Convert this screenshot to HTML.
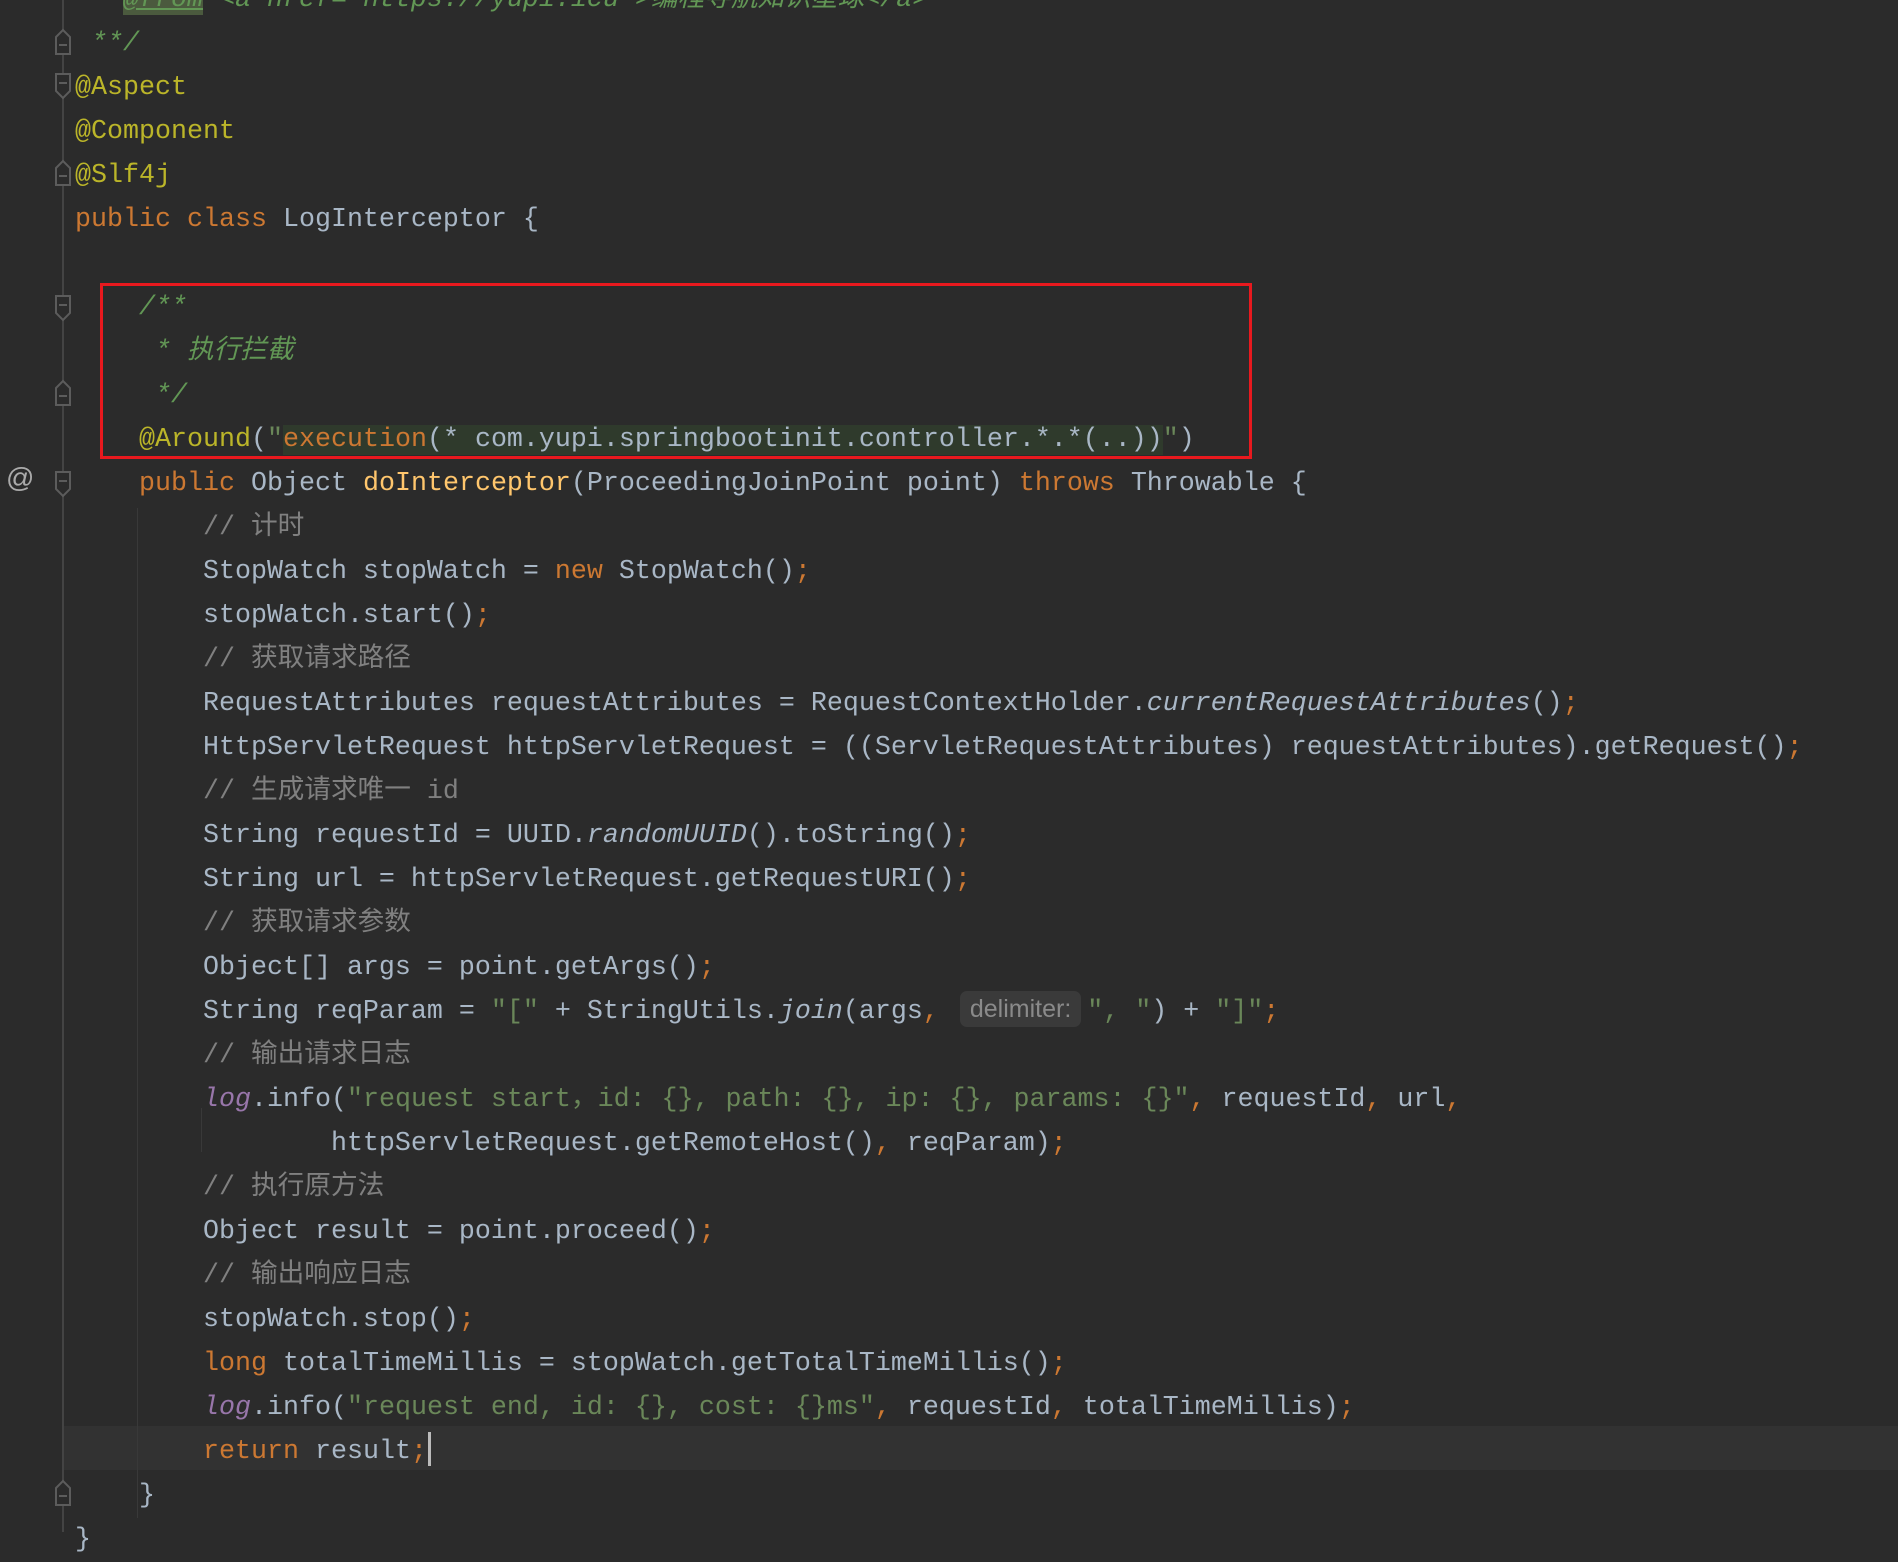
<!DOCTYPE html>
<html><head><meta charset="utf-8"><style>
html,body{margin:0;padding:0;}
body{width:1898px;height:1532px;background:#2b2b2b;position:relative;overflow:hidden;font-family:"Liberation Mono","Noto Sans CJK SC",monospace;font-size:26.67px;color:#a9b7c6;}
.gl{position:absolute;left:62px;top:0;width:2px;height:1532px;background:#444;}
.hl{position:absolute;left:64px;top:1426px;width:1834px;height:44px;background:#323232;}
.ig{position:absolute;width:1px;background:#393939;}
pre{position:absolute;left:75px;top:-22px;margin:0;font:inherit;line-height:44px;white-space:pre;}
.k{color:#cc7832}.a{color:#bbb529}.s{color:#6a8759}.c{color:#808080}.d{color:#629755;font-style:italic}
.m{color:#ffc66d}.i{font-style:italic}.l{color:#9876aa;font-style:italic}
.eb{background:#2f3a2c;color:#a9b7c6}
.tag{background:#4b5a3e;text-decoration:underline}
.hint{display:inline-block;font-family:"Liberation Sans","DejaVu Sans",sans-serif;font-size:25px;color:#8a8a8a;background:#3a3a3a;border-radius:7px;line-height:36px;padding:0 10px;margin:0 6px 0 21px;vertical-align:1px;font-style:normal}
.caret{display:inline-block;width:3px;height:34px;background:#bbb;vertical-align:-8px;margin-left:1px}
.box{position:absolute;left:100px;top:283px;width:1146px;height:170px;border:3px solid #e8191e;}
.f{position:absolute;left:54px;}
.at{position:absolute;left:6px;top:462px;color:#aaa;font-family:"Liberation Sans",sans-serif;font-size:28px;}
</style></head><body>
<div class="hl"></div>
<div class="gl"></div>
<div class="ig" style="left:137px;top:508px;height:1010px"></div>
<div class="ig" style="left:201px;top:1108px;height:44px"></div>
<svg class="f" style="top:28px" width="18" height="28"><path d="M2 9 L9 2 L16 9 L16 26 L2 26 Z" fill="#2b2b2b" stroke="#5c5c5c" stroke-width="2"/><path d="M5 17 H13" stroke="#5c5c5c" stroke-width="2"/></svg>
<svg class="f" style="top:72px" width="18" height="28"><path d="M2 2 L16 2 L16 19 L9 26 L2 19 Z" fill="#2b2b2b" stroke="#5c5c5c" stroke-width="2"/><path d="M5 11 H13" stroke="#5c5c5c" stroke-width="2"/></svg>
<svg class="f" style="top:159px" width="18" height="28"><path d="M2 9 L9 2 L16 9 L16 26 L2 26 Z" fill="#2b2b2b" stroke="#5c5c5c" stroke-width="2"/><path d="M5 17 H13" stroke="#5c5c5c" stroke-width="2"/></svg>
<svg class="f" style="top:294px" width="18" height="28"><path d="M2 2 L16 2 L16 19 L9 26 L2 19 Z" fill="#2b2b2b" stroke="#5c5c5c" stroke-width="2"/><path d="M5 11 H13" stroke="#5c5c5c" stroke-width="2"/></svg>
<svg class="f" style="top:379px" width="18" height="28"><path d="M2 9 L9 2 L16 9 L16 26 L2 26 Z" fill="#2b2b2b" stroke="#5c5c5c" stroke-width="2"/><path d="M5 17 H13" stroke="#5c5c5c" stroke-width="2"/></svg>
<svg class="f" style="top:470px" width="18" height="28"><path d="M2 2 L16 2 L16 19 L9 26 L2 19 Z" fill="#2b2b2b" stroke="#5c5c5c" stroke-width="2"/><path d="M5 11 H13" stroke="#5c5c5c" stroke-width="2"/></svg>
<svg class="f" style="top:1479px" width="18" height="28"><path d="M2 9 L9 2 L16 9 L16 26 L2 26 Z" fill="#2b2b2b" stroke="#5c5c5c" stroke-width="2"/><path d="M5 17 H13" stroke="#5c5c5c" stroke-width="2"/></svg>
<div class="at">@</div>
<pre><span class="d"> * <span class="tag">@from</span> &lt;a href="https://yupi.icu"&gt;编程导航知识星球&lt;/a&gt;</span>
<span class="d"> **/</span>
<span class="a">@Aspect</span>
<span class="a">@Component</span>
<span class="a">@Slf4j</span>
<span class="k">public class </span>LogInterceptor {

    <span class="d">/**</span>
<span class="d">     * 执行拦截</span>
<span class="d">     */</span>
    <span class="a">@Around</span>(<span class="s">"</span><span class="eb"><span class="k">execution</span>(* com.yupi.springbootinit.controller.*.*(..))</span><span class="s">"</span>)
    <span class="k">public </span>Object <span class="m">doInterceptor</span>(ProceedingJoinPoint point) <span class="k">throws </span>Throwable {
        <span class="c">// 计时</span>
        StopWatch stopWatch = <span class="k">new </span>StopWatch()<span class="k">;</span>
        stopWatch.start()<span class="k">;</span>
        <span class="c">// 获取请求路径</span>
        RequestAttributes requestAttributes = RequestContextHolder.<span class="i">currentRequestAttributes</span>()<span class="k">;</span>
        HttpServletRequest httpServletRequest = ((ServletRequestAttributes) requestAttributes).getRequest()<span class="k">;</span>
        <span class="c">// 生成请求唯一 id</span>
        String requestId = UUID.<span class="i">randomUUID</span>().toString()<span class="k">;</span>
        String url = httpServletRequest.getRequestURI()<span class="k">;</span>
        <span class="c">// 获取请求参数</span>
        Object[] args = point.getArgs()<span class="k">;</span>
        String reqParam = <span class="s">"["</span> + StringUtils.<span class="i">join</span>(args<span class="k">,</span><span class="hint">delimiter:</span><span class="s">", "</span>) + <span class="s">"]"</span><span class="k">;</span>
        <span class="c">// 输出请求日志</span>
        <span class="l">log</span>.info(<span class="s">"request start，id: {}, path: {}, ip: {}, params: {}"</span><span class="k">, </span>requestId<span class="k">, </span>url<span class="k">,</span>
                httpServletRequest.getRemoteHost()<span class="k">, </span>reqParam)<span class="k">;</span>
        <span class="c">// 执行原方法</span>
        Object result = point.proceed()<span class="k">;</span>
        <span class="c">// 输出响应日志</span>
        stopWatch.stop()<span class="k">;</span>
        <span class="k">long </span>totalTimeMillis = stopWatch.getTotalTimeMillis()<span class="k">;</span>
        <span class="l">log</span>.info(<span class="s">"request end, id: {}, cost: {}ms"</span><span class="k">, </span>requestId<span class="k">, </span>totalTimeMillis)<span class="k">;</span>
        <span class="k">return </span>result<span class="k">;</span><span class="caret"></span>
    }
}</pre>
<div class="box"></div>
</body></html>
